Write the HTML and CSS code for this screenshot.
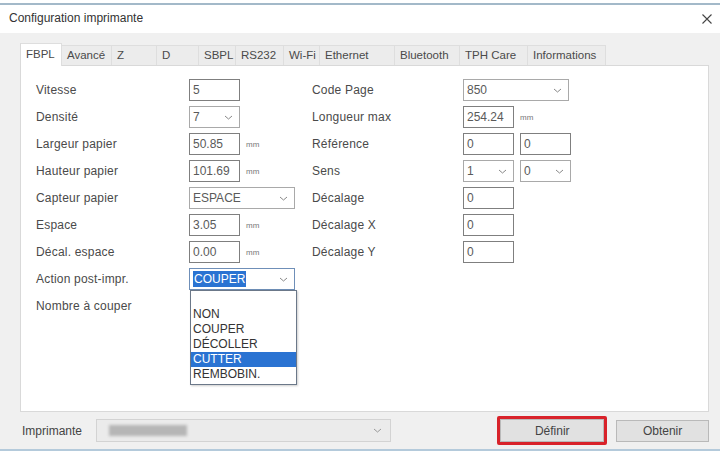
FILE: index.html
```html
<!DOCTYPE html>
<html lang="fr">
<head>
    <meta charset="UTF-8">
    <meta name="viewport" content="width=device-width, initial-scale=1.0">
    <title>Configuration imprimante</title>
    <link rel="stylesheet" href="styles.css">
</head>
<body>
    <div class="window">
        <div class="titlebar">
            <span>Configuration imprimante</span>
            <svg class="close" width="10" height="10" viewBox="0 0 10 10"><path d="M0.5 0.5 L9.5 9.5 M9.5 0.5 L0.5 9.5" stroke="#444" stroke-width="1.1" fill="none"/></svg>
        </div>
        <div class="main">
            <div class="tabs">
                <div class="tab active" style="width:42px">FBPL</div>
                <div class="tab" style="width:50px">Avancé</div>
                <div class="tab" style="width:45px">Z</div>
                <div class="tab" style="width:42px">D</div>
                <div class="tab" style="width:37px">SBPL</div>
                <div class="tab" style="width:48px">RS232</div>
                <div class="tab" style="width:36px">Wi-Fi</div>
                <div class="tab" style="width:75px">Ethernet</div>
                <div class="tab" style="width:65px">Bluetooth</div>
                <div class="tab" style="width:68px">TPH Care</div>
                <div class="tab" style="width:78px">Informations</div>
            </div>
            <div class="panel">
                <div class="form">
                    <!-- ligne 1 -->
                    <div class="lbl">Vitesse</div>
                    <div class="ctl"><div class="field">5</div></div>
                    <div class="lbl">Code Page</div>
                    <div class="ctl"><div class="field select wide">850<svg width="9" height="5" viewBox="0 0 9 5"><path d="M1 1 L4.5 4 L8 1" stroke="#888" fill="none"/></svg></div></div>
                    <!-- ligne 2 -->
                    <div class="lbl">Densité</div>
                    <div class="ctl"><div class="field select">7<svg width="9" height="5" viewBox="0 0 9 5"><path d="M1 1 L4.5 4 L8 1" stroke="#888" fill="none"/></svg></div></div>
                    <div class="lbl">Longueur max</div>
                    <div class="ctl"><div class="field">254.24</div><span class="unit">mm</span></div>
                    <!-- ligne 3 -->
                    <div class="lbl">Largeur papier</div>
                    <div class="ctl"><div class="field">50.85</div><span class="unit">mm</span></div>
                    <div class="lbl">Référence</div>
                    <div class="ctl"><div class="field">0</div><div class="field">0</div></div>
                    <!-- ligne 4 -->
                    <div class="lbl">Hauteur papier</div>
                    <div class="ctl"><div class="field">101.69</div><span class="unit">mm</span></div>
                    <div class="lbl">Sens</div>
                    <div class="ctl">
                        <div class="field select">1<svg width="9" height="5" viewBox="0 0 9 5"><path d="M1 1 L4.5 4 L8 1" stroke="#888" fill="none"/></svg></div>
                        <div class="field select">0<svg width="9" height="5" viewBox="0 0 9 5"><path d="M1 1 L4.5 4 L8 1" stroke="#888" fill="none"/></svg></div>
                    </div>
                    <!-- ligne 5 -->
                    <div class="lbl">Capteur papier</div>
                    <div class="ctl"><div class="field select wide">ESPACE<svg width="9" height="5" viewBox="0 0 9 5"><path d="M1 1 L4.5 4 L8 1" stroke="#888" fill="none"/></svg></div></div>
                    <div class="lbl">Décalage</div>
                    <div class="ctl"><div class="field">0</div></div>
                    <!-- ligne 6 -->
                    <div class="lbl">Espace</div>
                    <div class="ctl"><div class="field">3.05</div><span class="unit">mm</span></div>
                    <div class="lbl">Décalage X</div>
                    <div class="ctl"><div class="field">0</div></div>
                    <!-- ligne 7 -->
                    <div class="lbl">Décal. espace</div>
                    <div class="ctl"><div class="field">0.00</div><span class="unit">mm</span></div>
                    <div class="lbl">Décalage Y</div>
                    <div class="ctl"><div class="field">0</div></div>
                    <!-- ligne 8 -->
                    <div class="lbl">Action post-impr.</div>
                    <div class="ctl"><div class="field select wide focus"><span class="sel">COUPER</span><svg width="9" height="5" viewBox="0 0 9 5"><path d="M1 1 L4.5 4 L8 1" stroke="#888" fill="none"/></svg></div></div>
                    <div class="lbl"></div>
                    <div class="ctl"></div>
                    <!-- ligne 9 -->
                    <div class="lbl">Nombre à couper</div>
                    <div class="ctl"></div>
                </div>
                <ul class="dropdown">
                    <li></li>
                    <li>NON</li>
                    <li>COUPER</li>
                    <li>DÉCOLLER</li>
                    <li class="hover">CUTTER</li>
                    <li>REMBOBIN.</li>
                </ul>
            </div>
            <div class="bottom">
                <div class="printer-lbl">Imprimante</div>
                <div class="combo">
                    <div class="blurred"></div>
                    <svg width="9" height="5" viewBox="0 0 9 5"><path d="M1 1 L4.5 4 L8 1" stroke="#999" fill="none"/></svg>
                </div>
                <div class="mark">
                    <div class="btn">Définir</div>
                </div>
                <div class="btn get">Obtenir</div>
            </div>
        </div>
    </div>
</body>
</html>
```
FILE: styles.css
```css
*{
    margin: 0;
    padding: 0;
    list-style: none;
    box-sizing: border-box;
}
body{
    background-color: #fff;
    font-family: "Liberation Sans", Arial, sans-serif;
    font-size: 12px;
    color: #444;
}
.window{
    margin-top: 3px;
    border-top: 2px solid #a3b9c9;
    border-bottom: 2px solid #b4cadb;
    height: 448px;
}
.titlebar{
    height: 28px;
    display: flex;
    align-items: center;
    justify-content: space-between;
    padding: 0 8px 2px 9px;
    background-color: #fff;
    color: #333;
}
.titlebar .close{
    margin-top: 1px;
}
.main{
    background-color: #f0f0f0;
    padding: 10px 11px 0 20px;
    height: 416px;
}
.tabs{
    display: flex;
    align-items: flex-end;
    height: 22px;
    position: relative;
    z-index: 1;
}
.tab{
    height: 20px;
    line-height: 19px;
    padding-left: 5px;
    background-color: #ececec;
    border: 1px solid #dedede;
    border-left: none;
    border-bottom: none;
    font-size: 11.5px;
    color: #4a4a4a;
    white-space: nowrap;
}
.tab.active{
    height: 23px;
    margin-bottom: -1px;
    background-color: #fff;
    border-left: 1px solid #dadada;
    line-height: 21px;
}
.panel{
    position: relative;
    height: 347px;
    background-color: #fff;
    border: 1px solid #d9d9d9;
}
.form{
    display: grid;
    grid-template-columns: 153px 123px 151px auto;
    grid-auto-rows: 22px;
    row-gap: 5px;
    padding: 13px 0 0 15px;
}
.lbl{
    display: flex;
    align-items: center;
    color: #4a4a4a;
    letter-spacing: 0.2px;
    white-space: nowrap;
}
.ctl{
    display: flex;
    align-items: center;
    gap: 6px;
}
.field{
    width: 51px;
    height: 22px;
    border: 1px solid #7f7f7f;
    background-color: #fff;
    padding-left: 3px;
    line-height: 20px;
    color: #5a5a5a;
}
.field.select{
    display: flex;
    align-items: center;
    justify-content: space-between;
    padding-right: 6px;
    border-color: #a9a9a9;
}
.field.wide{
    width: 106px;
}
.field.focus{
    border-color: #6f8fb8;
}
.field .sel{
    background-color: #2a73d2;
    color: #fff;
    padding: 0 1px;
    line-height: 16px;
}
.unit{
    font-size: 8px;
    color: #777;
}
.dropdown{
    position: absolute;
    left: 169px;
    top: 224px;
    width: 107px;
    padding: 1px 0 2px;
    background-color: #fff;
    border: 1px solid #6b7889;
    box-shadow: 1px 1px 2px rgba(0, 0, 0, 0.2);
}
.dropdown li{
    height: 15px;
    line-height: 15px;
    padding-left: 2px;
    color: #333;
}
.dropdown li.hover{
    background-color: #2a73d2;
    color: #fff;
}
.bottom{
    display: flex;
    align-items: center;
    height: 37px;
    padding-left: 2px;
}
.printer-lbl{
    width: 74px;
    color: #444;
}
.combo{
    width: 296px;
    height: 23px;
    display: flex;
    align-items: center;
    justify-content: space-between;
    padding: 0 8px 0 12px;
    background-color: #ebebeb;
    border: 1px solid #d3d3d3;
}
.blurred{
    width: 78px;
    height: 11px;
    background-color: #b6b6b6;
    filter: blur(1.5px);
}
.mark{
    margin-left: 106px;
    width: 110px;
    height: 29px;
    border: 3px solid #d8222a;
    border-radius: 2px;
}
.btn{
    height: 100%;
    display: flex;
    align-items: center;
    justify-content: center;
    background-color: #e1e1e1;
    border: 1px solid #b9b9b9;
    color: #444;
}
.btn.get{
    margin-left: 9px;
    width: 93px;
    height: 22px;
}
```
